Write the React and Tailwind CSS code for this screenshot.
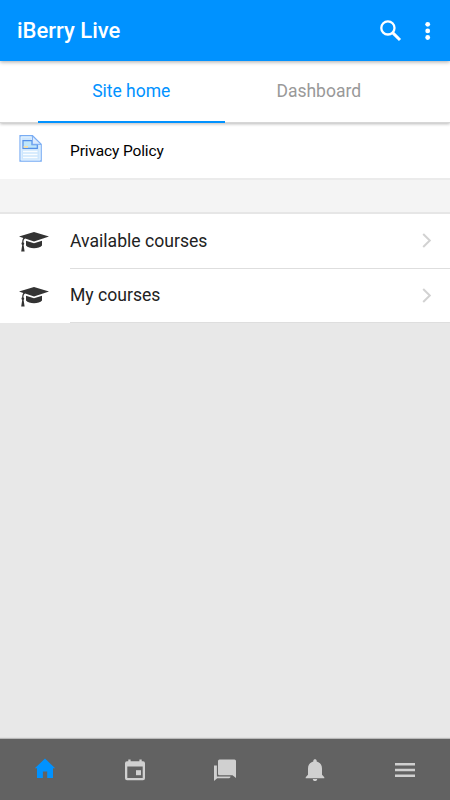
function SearchIcon() {
  return (
    <svg width="22" height="22" viewBox="0 0 22 22" fill="none" stroke="#fff">
      <circle cx="7.9" cy="7.9" r="6.6" strokeWidth="2.3" />
      <path d="M12.6 12.6 L20 20" strokeWidth="3" />
    </svg>
  );
}

function MoreIcon() {
  return (
    <svg width="6" height="20" viewBox="0 0 6 20" fill="#fff">
      <circle cx="2.7" cy="3.3" r="2.4" />
      <circle cx="2.7" cy="9.9" r="2.4" />
      <circle cx="2.7" cy="16.5" r="2.4" />
    </svg>
  );
}

function PageIcon() {
  return (
    <svg width="23" height="27" viewBox="0 0 23 27">
      <path d="M1 .7 H13.5 L22.2 9.3 V26.2 H1 Z" fill="#cde6fd" stroke="#79acf3" strokeWidth="1.2" />
      <path d="M2.2 2 H12.5 V9.5 H21 V25 H2.2 Z" fill="none" stroke="#e3f2ff" strokeWidth="1" />
      <path d="M4 5.6 H13 V9.6 H18.3 V13.4 H4 Z" fill="#bfe6fa" stroke="#5590e8" strokeWidth="1.2" />
      <path d="M4.6 11 H9 V12.8 H4.6 Z" fill="#f8dfa5" />
      <path d="M13.4 .9 V9.3 H22 Z" fill="#dcebfd" stroke="#79acf3" strokeWidth="1" />
      <path d="M4 16.5 H18.5 M4 19.5 H18.5 M4 22.5 H18.5" stroke="#fafdff" strokeWidth="1.4" />
    </svg>
  );
}

function CapIcon() {
  return (
    <svg width="30" height="20" viewBox="0 0 30 20" fill="#333">
      <path d="M15 0 L30 4.6 L15 9.5 L6.2 6.6 C5 7.3 4.5 8.3 4.4 10.3 C5.5 11.1 5.5 12.3 4.6 13 L5.6 19.4 H2.2 L3.2 13 C2.2 12.2 2.3 11 3.2 10.3 C3.2 8.6 3.5 7.2 4.3 6 L0 4.6 Z" />
      <path d="M7 8.7 L15 11.3 L23 8.7 V13.6 C21.5 15.4 18.5 16.3 15 16.3 C11.5 16.3 8.5 15.4 7 13.6 Z" />
    </svg>
  );
}

function HomeIcon() {
  return (
    <svg width="22" height="22" viewBox="0 0 22 22" fill="#0092ff">
      <path d="M11 -.4 L0.8 9.3 H3 V19.1 H8.9 V12.5 H13.2 V19.1 H19 V9.3 H21.2 Z" />
    </svg>
  );
}

function CalendarIcon() {
  return (
    <svg width="20" height="22" viewBox="0 0 20 22" fill="#d0d0d0">
      <path
        fillRule="evenodd"
        d="M3.3 -.5 H5.6 V1.2 H14.4 V-.5 H16.7 V1.2 H18 Q20 1.2 20 3.2 V18.2 Q20 20.2 18 20.2 H2 Q0 20.2 0 18.2 V3.2 Q0 1.2 2 1.2 H3.3 Z M2.3 6.6 V17.9 H17.7 V6.6 Z"
      />
      <rect x="11" y="10.2" width="5" height="5" />
    </svg>
  );
}

function ChatIcon() {
  return (
    <svg width="22" height="22" viewBox="0 0 22 22" fill="#d0d0d0">
      <path d="M5.5 -.5 H20.5 Q22 -.5 22 1 V18 L18.5 15.3 H5.5 Q4 15.3 4 13.8 V1 Q4 -.5 5.5 -.5 Z" />
      <path d="M0 5.6 H2.9 V16.4 H16.5 Q16.5 18.2 15 18.2 H3.2 L0 21 Z" />
    </svg>
  );
}

function BellIcon() {
  return (
    <svg width="20" height="22" viewBox="0 0 20 22" fill="#d0d0d0">
      <path d="M10 -.8 C11 -.8 11.7 -.1 11.7 .9 V1.5 C15 2.4 17 5 17 8.4 V14.7 L19.3 17.2 V18.2 H.7 V17.2 L3 14.7 V8.4 C3 5 5 2.4 8.3 1.5 V.9 C8.3 -.1 9 -.8 10 -.8 Z" />
      <path d="M7.8 18.9 H12.2 C12.2 20.2 11.2 21.1 10 21.1 C8.8 21.1 7.8 20.2 7.8 18.9 Z" />
    </svg>
  );
}

function MenuIcon() {
  return (
    <svg width="20" height="14" viewBox="0 0 20 14" fill="#d0d0d0">
      <path d="M0 0 H20 V2.6 H0 Z M0 5.7 H20 V8.3 H0 Z M0 11.4 H20 V14 H0 Z" />
    </svg>
  );
}

function CourseRow({ label, textPad }) {
  return (
    <div className="flex h-[55px] bg-white last:h-[54px]">
      <div className="w-[70px] shrink-0 pl-[19px] pt-[18px]">
        <CapIcon />
      </div>
      <div className="flex flex-1 justify-between border-b border-[#dedede] pr-[18px]">
        <span className={`text-[17.6px] leading-[26px] text-[#222] ${textPad}`}>{label}</span>
        <svg className="mt-[19px]" width="10" height="16" viewBox="0 0 10 16" fill="none" stroke="#d2d2d2" strokeWidth="2">
          <path d="M1.2 1 L7.8 7.5 L1.2 14" />
        </svg>
      </div>
    </div>
  );
}

const navItems = [
  { name: 'home', icon: <HomeIcon />, pad: 'pt-[20px]' },
  { name: 'calendar', icon: <CalendarIcon />, pad: 'pt-[21px]' },
  { name: 'messages', icon: <ChatIcon />, pad: 'pt-[20.5px]' },
  { name: 'notifications', icon: <BellIcon />, pad: 'pt-[20.5px]' },
  { name: 'more', icon: <MenuIcon />, pad: 'pt-6' },
];

export default function App() {
  return (
    <div className="flex h-[800px] w-[450px] flex-col overflow-hidden bg-[#e8e8e8] font-['Roboto',sans-serif]">
      <header className="relative z-20 flex h-[61px] shrink-0 bg-[#0092ff] pl-[17px] pr-[19px] pt-5 shadow-[0_1px_4px_rgba(0,0,0,0.35)]">
        <h1 className="-mt-[2px] flex-1 text-[22px] font-medium leading-[26px] text-white">iBerry Live</h1>
        <SearchIcon />
        <div className="ml-[23px] pt-px">
          <MoreIcon />
        </div>
      </header>

      <nav className="relative z-10 flex h-[62px] shrink-0 border-b border-[#d6d6d6] bg-white px-[37.5px] text-center text-[17.5px] leading-[26px] shadow-[0_1px_3px_rgba(0,0,0,0.28)]">
        <div className="-mb-[0.5px] w-1/2 border-b-2 border-[#0092ff] pt-[17px] text-[#0092ff]">Site home</div>
        <div className="w-1/2 pt-[17px] text-[#999]">Dashboard</div>
      </nav>

      <main className="flex-1">
        <div className="flex h-[57px] bg-[#f4f4f4]">
          <div className="h-[56px] w-[70px] shrink-0 bg-white pl-[19px] pt-3">
            <PageIcon />
          </div>
          <div className="flex-1 border-b-2 border-[#ebebeb] bg-white pt-[15px] text-[15.5px] leading-[26px] tracking-[-0.13px] text-black">
            Privacy Policy
          </div>
        </div>
        <div className="h-[34px] border-b-2 border-[#e6e6e6] bg-[#f4f4f4]" />
        <div>
          <CourseRow label="Available courses" textPad="pt-[14px]" />
          <CourseRow label="My courses" textPad="pt-[13px]" />
        </div>
      </main>

      <footer className="grid h-[61px] shrink-0 grid-cols-5 bg-[#626262] shadow-[0_-1px_1px_rgba(0,0,0,0.2)]">
        {navItems.map((item) => (
          <button key={item.name} className={`flex items-start justify-center [&_svg]:overflow-visible ${item.pad}`}>
            {item.icon}
          </button>
        ))}
      </footer>
    </div>
  );
}
